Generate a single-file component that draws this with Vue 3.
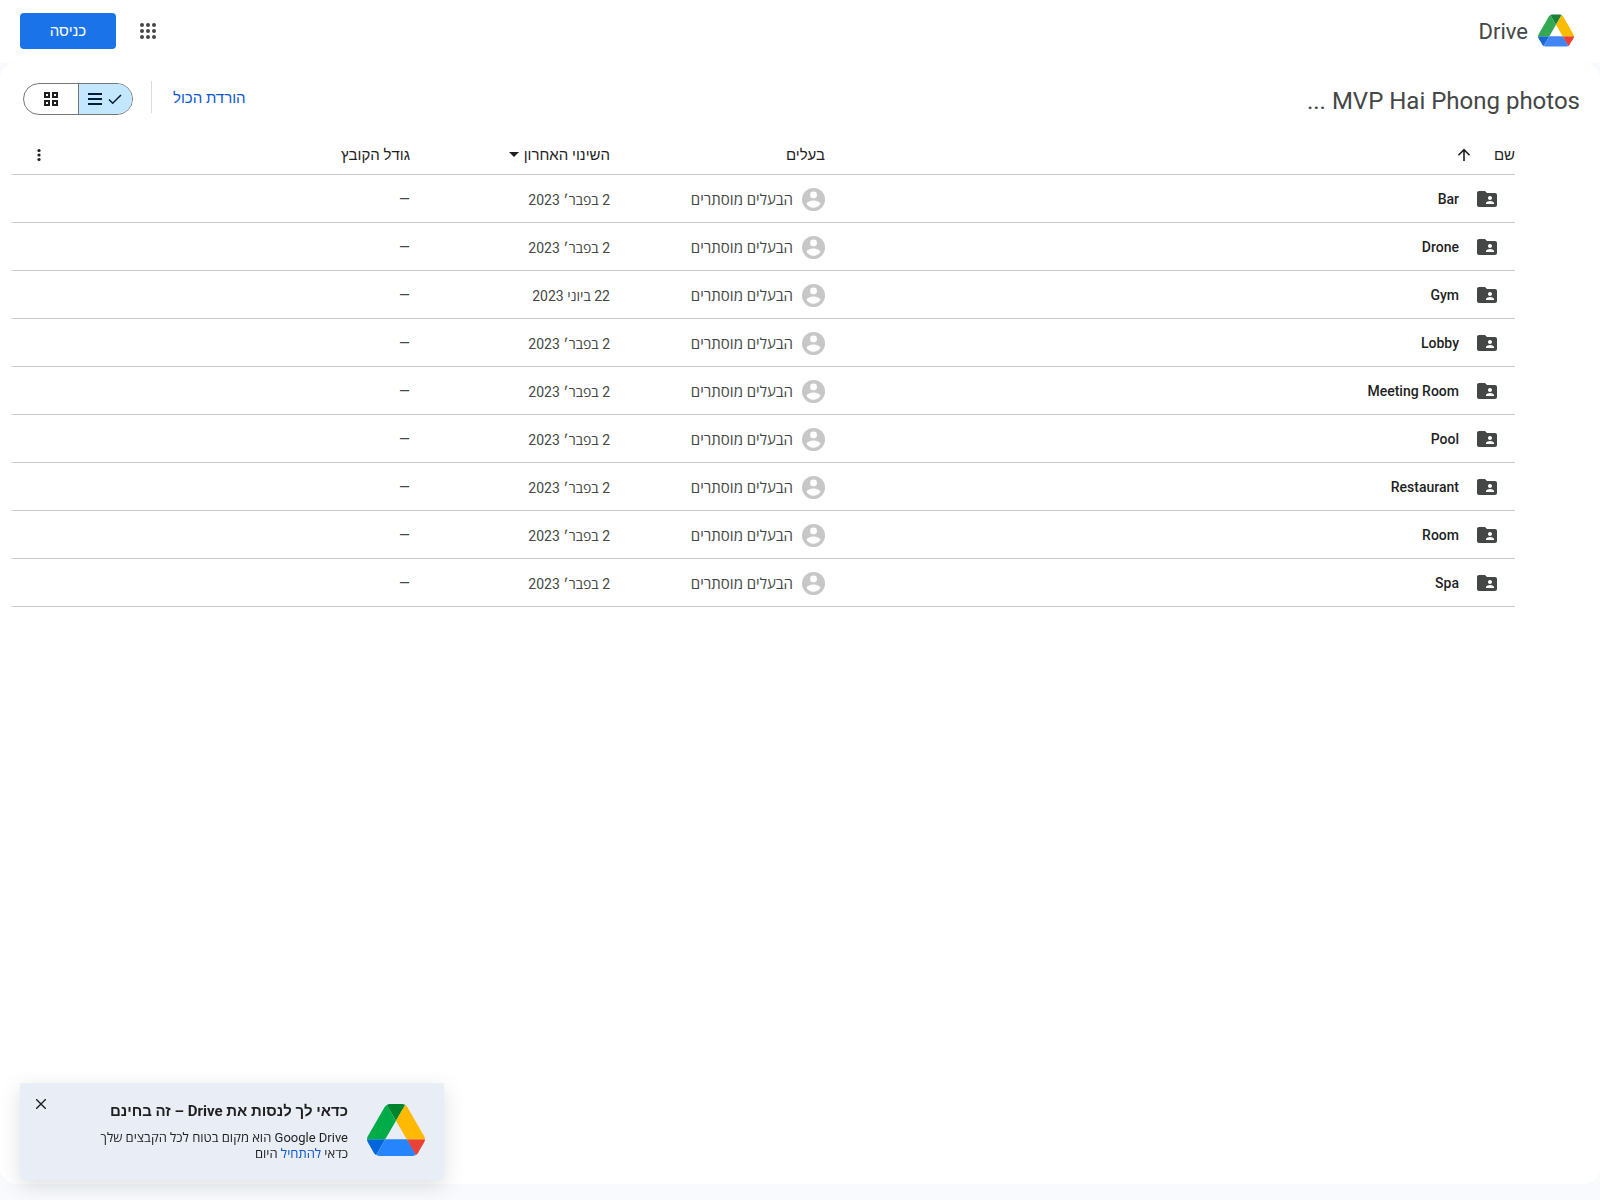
<script setup>
import { ref, h } from 'vue'

const view = ref('list')
const bannerOpen = ref(true)

const folders = [
  { name: 'Bar', modified: '2 בפבר׳ 2023' },
  { name: 'Drone', modified: '2 בפבר׳ 2023' },
  { name: 'Gym', modified: '22 ביוני 2023' },
  { name: 'Lobby', modified: '2 בפבר׳ 2023' },
  { name: 'Meeting Room', modified: '2 בפבר׳ 2023' },
  { name: 'Pool', modified: '2 בפבר׳ 2023' },
  { name: 'Restaurant', modified: '2 בפבר׳ 2023' },
  { name: 'Room', modified: '2 בפבר׳ 2023' },
  { name: 'Spa', modified: '2 בפבר׳ 2023' },
]

const logoPaths = [
  'm6.6 66.85 3.85 6.65c.8 1.4 1.95 2.5 3.3 3.3l13.75-23.8h-27.5c0 1.55.4 3.1 1.2 4.5z',
  'm43.65 25-13.75-23.8c-1.35.8-2.5 1.9-3.3 3.3l-25.4 44a9.06 9.06 0 0 0-1.2 4.5h27.5z',
  'm73.55 76.8c1.35-.8 2.5-1.9 3.3-3.3l1.6-2.75 7.65-13.25c.8-1.4 1.2-2.95 1.2-4.5h-27.5l5.85 11.5z',
  'm43.65 25 13.75-23.8c-1.35-.8-2.9-1.2-4.5-1.2h-18.5c-1.6 0-3.15.45-4.5 1.2z',
  'm59.8 53h-32.3l-13.75 23.8c1.35.8 2.9 1.2 4.5 1.2h50.8c1.6 0 3.15-.45 4.5-1.2z',
  'm73.4 26.5-12.7-22c-.8-1.4-1.95-2.5-3.3-3.3l-13.75 23.8 16.15 28h27.45c0-1.55-.4-3.1-1.2-4.5z',
]
const headerColors = ['#1967d2', '#34a853', '#ea4335', '#188038', '#4285f4', '#fbbc04']
const bannerColors = ['#0066da', '#00ac47', '#ea4335', '#00832d', '#2684fc', '#ffba00']

const DriveLogo = (props) =>
  h('svg', { viewBox: '0 0 87.3 78', 'aria-hidden': 'true' },
    logoPaths.map((d, i) => h('path', { d, fill: props.colors[i] })))
DriveLogo.props = ['colors']
</script>

<template>
  <div class="page" dir="rtl">
    <header class="topbar">
      <a class="brand" href="#">
        <DriveLogo class="brand-logo" :colors="headerColors" />
        <span>Drive</span>
      </a>
      <div class="account">
        <button class="apps" type="button" aria-label="Google apps">
          <svg viewBox="0 0 24 24" width="24" height="24" fill="#444746">
            <template v-for="y in [6, 12, 18]" :key="y">
              <circle v-for="x in [6, 12, 18]" :key="x" :cx="x" :cy="y" r="2" />
            </template>
          </svg>
        </button>
        <button class="signin" type="button">כניסה</button>
      </div>
    </header>

    <main class="panel">
      <div class="toolbar">
        <h1>MVP Hai Phong photos ...</h1>
        <div class="actions">
          <button class="download" type="button">הורדת הכול</button>
          <span class="divider"></span>
          <div class="toggle">
            <button type="button" :class="{ on: view === 'list' }" aria-label="List" @click="view = 'list'">
              <svg v-if="view === 'list'" viewBox="0 0 18 18" width="18" height="18" fill="none" stroke="currentColor" stroke-width="1.5">
                <path d="M3 9.5l3.7 3.7L15 5" />
              </svg>
              <svg viewBox="0 0 18 18" width="18" height="18" fill="currentColor">
                <path d="M2 3h14v2H2zM2 8h14v2H2zM2 13h14v2H2z" />
              </svg>
            </button>
            <button type="button" :class="{ on: view === 'grid' }" aria-label="Grid" @click="view = 'grid'">
              <svg viewBox="0 0 18 18" width="18" height="18" fill="none" stroke="currentColor" stroke-width="2">
                <path d="M3 3h4v4H3zM11 3h4v4h-4zM3 11h4v4H3zM11 11h4v4h-4z" />
              </svg>
            </button>
          </div>
        </div>
      </div>

      <table class="files">
        <colgroup>
          <col />
          <col class="c-owner" />
          <col class="c-modified" />
          <col class="c-size" />
          <col class="c-more" />
        </colgroup>
        <thead>
          <tr>
            <th scope="col">
              <button class="sort name-sort" type="button">
                שם
                <svg viewBox="0 0 18 18" width="18" height="18" fill="none" stroke="currentColor" stroke-width="1.6">
                  <path d="M9 15V3.8M3.5 9.2L9 3.7l5.5 5.5" />
                </svg>
              </button>
            </th>
            <th scope="col">בעלים</th>
            <th scope="col">
              <button class="sort" type="button">
                השינוי האחרון
                <svg viewBox="0 0 10 5" width="10" height="5" fill="currentColor"><path d="M0 0h10L5 5z" /></svg>
              </button>
            </th>
            <th scope="col">גודל הקובץ</th>
            <th scope="col" class="more-cell">
              <button class="more" type="button" aria-label="More">
                <svg viewBox="0 0 18 18" width="18" height="18" fill="currentColor">
                  <circle cx="9" cy="4.5" r="1.6" /><circle cx="9" cy="9" r="1.6" /><circle cx="9" cy="13.5" r="1.6" />
                </svg>
              </button>
            </th>
          </tr>
        </thead>
        <tbody>
          <tr v-for="f in folders" :key="f.name">
            <td>
              <div class="name">
                <svg viewBox="0 0 24 24" width="24" height="24" fill="#444746">
                  <path d="M20 6h-8l-2-2H4c-1.1 0-2 .9-2 2v12c0 1.1.9 2 2 2h16c1.1 0 2-.9 2-2V8c0-1.1-.9-2-2-2zm-5 3c1.1 0 2 .9 2 2s-.9 2-2 2-2-.9-2-2 .9-2 2-2zm4 8h-8v-1c0-1.33 2.67-2 4-2s4 .67 4 2v1z" />
                </svg>
                <span>{{ f.name }}</span>
              </div>
            </td>
            <td>
              <div class="owner">
                <svg viewBox="2 2 20 20" width="23" height="23" fill="#c7c7c7">
                  <path fill-rule="evenodd" d="M12 2a10 10 0 1 0 0 20 10 10 0 0 0 0-20zm0 3a3 3 0 1 1 0 6 3 3 0 0 1 0-6zm0 14.2c-2.5 0-4.71-1.28-6-3.22.03-1.99 4-3.08 6-3.08s5.97 1.09 6 3.08c-1.29 1.94-3.5 3.22-6 3.22z" />
                </svg>
                <span>הבעלים מוסתרים</span>
              </div>
            </td>
            <td>{{ f.modified }}</td>
            <td>—</td>
            <td></td>
          </tr>
        </tbody>
      </table>
    </main>

    <aside v-if="bannerOpen" class="banner">
      <DriveLogo class="banner-logo" :colors="bannerColors" />
      <div class="banner-text">
        <h2>כדאי לך לנסות את Drive – זה בחינם</h2>
        <p>Google Drive הוא מקום בטוח לכל הקבצים שלך</p>
        <p>כדאי <a href="#">להתחיל</a> היום</p>
      </div>
      <button class="close" type="button" aria-label="סגירה" @click="bannerOpen = false">
        <svg viewBox="0 0 10 10" width="10" height="10" fill="none" stroke="currentColor" stroke-width="1.4">
          <path d="M0 0l10 10M10 0L0 10" />
        </svg>
      </button>
    </aside>
  </div>
</template>

<style>
body {
  background: #f8fafd;
}
</style>

<style scoped>
.page {
  display: flex;
  flex-direction: column;
  box-sizing: border-box;
  min-height: 100vh;
  padding-bottom: 16px;
  color: #1f1f1f;
  font-family: Roboto, "Open Sans", sans-serif;
  font-size: 14px;
}
button {
  margin: 0;
  padding: 0;
  border: 0;
  background: none;
  color: inherit;
  font: inherit;
  cursor: pointer;
}
svg {
  display: block;
  flex: none;
}
.topbar {
  display: flex;
  align-items: center;
  justify-content: space-between;
  box-sizing: border-box;
  height: 63px;
  padding: 0 26px 2px 20px;
  background: #fff;
}
.brand {
  display: flex;
  align-items: center;
  gap: 10px;
  color: #444746;
  font-size: 22px;
  line-height: 28px;
  text-decoration: none;
}
.brand span {
  padding-top: 2px;
}
.brand-logo {
  width: 36px;
  height: 33px;
}
.account {
  display: flex;
  align-items: center;
  gap: 20px;
}
.signin,
.download,
th {
  font-family: Roboto, "Liberation Sans", sans-serif;
  font-size: 15px;
  font-weight: 500;
}
.signin {
  width: 96px;
  height: 36px;
  border-radius: 4px;
  background: #1a73e8;
  color: #fff;
}
.panel {
  flex: 1;
  padding: 18px 0 24px;
  border-radius: 16px;
  background: #fff;
}
.toolbar {
  display: flex;
  align-items: flex-start;
  justify-content: space-between;
  padding: 0 20px 0 23px;
}
h1 {
  margin: 0;
  color: #444746;
  font-size: 24px;
  font-weight: 400;
  line-height: 40px;
}
.actions {
  display: flex;
  align-items: flex-start;
}
.download {
  height: 34px;
  color: #0b57d0;
}
.divider {
  width: 1px;
  height: 32px;
  margin: 0 21px 0 18px;
  background: #dadce0;
}
.toggle {
  display: flex;
  box-sizing: border-box;
  width: 110px;
  height: 32px;
  margin-top: 2px;
  overflow: hidden;
  border: 1px solid #747775;
  border-radius: 16px;
}
.toggle button {
  display: flex;
  flex: 1;
  align-items: center;
  justify-content: center;
  gap: 2px;
}
.toggle button + button {
  border-right: 1px solid #747775;
}
.toggle .on {
  background: #c2e7ff;
  color: #001d35;
}
.files {
  width: calc(100% - 97px);
  margin: 13px 85px 0 12px;
  border-collapse: collapse;
  table-layout: fixed;
}
.c-owner {
  width: 215px;
}
.c-modified,
.c-size {
  width: 200px;
}
.c-more {
  width: 198px;
}
th,
td {
  box-sizing: border-box;
  height: 48px;
  padding: 2px 0 0;
  border-bottom: 1px solid #c7c7c7;
  text-align: right;
}
th {
  height: 40px;
}
td {
  color: #444746;
}
.sort {
  display: flex;
  align-items: center;
  gap: 5px;
}
.name-sort {
  gap: 21px;
}
.more-cell {
  padding-left: 18px;
}
.more {
  display: block;
  margin-right: auto;
}
.name {
  display: flex;
  align-items: center;
  gap: 16px;
  padding-right: 16px;
  color: #1f1f1f;
  font-weight: 500;
}
.owner {
  display: flex;
  align-items: center;
  gap: 9px;
  font-size: 15px;
}
.banner {
  position: fixed;
  bottom: 20px;
  left: 20px;
  display: flex;
  box-sizing: border-box;
  width: 424px;
  min-height: 97px;
  padding: 18px 19px;
  border-radius: 2px;
  background: #e9eef6;
  box-shadow: 0 6px 20px rgba(60, 64, 67, 0.17);
}
.banner-logo {
  width: 58px;
  height: 52px;
  margin: 3px 0 0 19px;
}
.banner h2 {
  margin: 0 0 9px;
  font-family: Roboto, "Liberation Sans", sans-serif;
  font-size: 15px;
  font-weight: 700;
  line-height: 20px;
}
.banner p {
  margin: 0;
  font-size: 13px;
  line-height: 16px;
}
.banner a {
  color: #0b57d0;
  text-decoration: none;
}
.close {
  position: absolute;
  top: 12px;
  left: 12px;
  padding: 4px;
}
</style>
